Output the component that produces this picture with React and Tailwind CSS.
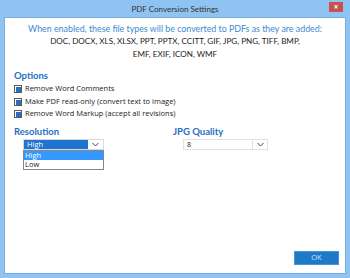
const font = { fontFamily: '"Open Sans", "Noto Sans", sans-serif' };
const lato = { fontFamily: 'Lato, "Open Sans", sans-serif' };

function Check({ label }) {
  return (
    <div className="flex items-center gap-[3px] h-[12px]">
      <div className="w-[8px] h-[8px] border border-[#5a5a5a] bg-white flex items-center justify-center">
        <div className="w-[5px] h-[5px] bg-[#2a6cc0]" />
      </div>
      <span className="text-[7.5px] text-[#222]">{label}</span>
    </div>
  );
}

function Chevron() {
  return (
    <svg width="7" height="5" viewBox="0 0 7 5" fill="none">
      <path d="M0.5 1 L3.5 4 L6.5 1" stroke="#444" strokeWidth="1" />
    </svg>
  );
}

export default function App() {
  return (
    <div className="w-[350px] h-[278px] bg-[#8fc3f2] flex flex-col overflow-hidden" style={font}>
      <div className="h-[17px] relative flex items-center justify-center shrink-0">
        <span className="text-[8px] text-[#333]" style={lato}>PDF Conversion Settings</span>
        <div className="absolute right-[7px] top-[2px] w-[14px] h-[10px] bg-[#c75050] flex items-center justify-center">
          <span className="text-white text-[8px] leading-none font-bold">×</span>
        </div>
      </div>
      <div className="flex-1 mx-[4px] mb-[4px] bg-white border border-[#78aee0] flex flex-col">
        <div className="text-center pt-[5px]" style={lato}>
          <div className="text-[8.85px] text-[#3b8ad3] leading-[12px]">When enabled, these file types will be converted to PDFs as they are added:</div>
          <div className="text-[8.1px] text-[#222] leading-[13px]">DOC, DOCX, XLS, XLSX, PPT, PPTX, CCITT, GIF, JPG, PNG, TIFF, BMP,</div>
          <div className="text-[8.1px] text-[#222] leading-[13px]">EMF, EXIF, ICON, WMF</div>
        </div>
        <div className="px-[9px] mt-[9px]">
          <div className="text-[9.5px] font-bold text-[#1f6fc1] leading-[12px]" style={lato}>Options</div>
          <div className="mt-[1px] flex flex-col">
            <Check label="Remove Word Comments" />
            <div className="h-[1px]" />
            <Check label="Make PDF read-only (convert text to image)" />
            <Check label="Remove Word Markup (accept all revisions)" />
          </div>
        </div>
        <div className="px-[9px] mt-[6px] grid grid-cols-2">
          <div>
            <div className="text-[9.5px] font-bold text-[#1f6fc1] leading-[12px]" style={lato}>Resolution</div>
            <div className="ml-[9px] mt-[1px] w-[81px]">
              <div className="h-[11px] flex border border-[#d9d9d9]">
                <div className="flex-1 bg-[#1f74cf] text-white text-[7.5px] leading-[9px] pl-[3px]">High</div>
                <div className="w-[15px] flex items-center justify-center bg-white"><Chevron /></div>
              </div>
              <div className="border border-[#828790] bg-white">
                <div className="bg-[#3399ff] text-white text-[7.5px] leading-[9px] pl-[1px]">High</div>
                <div className="text-[#222] text-[7.5px] leading-[9px] pl-[1px]">Low</div>
              </div>
            </div>
          </div>
          <div className="-ml-[2px]">
            <div className="text-[9.5px] font-bold text-[#1f6fc1] leading-[12px]" style={lato}>JPG Quality</div>
            <div className="ml-[10px] mt-[1px] w-[85px] h-[11px] flex border border-[#e2e2e2]">
              <div className="flex-1 text-[#222] text-[7px] leading-[9px] pl-[3px]">8</div>
              <div className="w-[15px] flex items-center justify-center border-l border-[#e2e2e2]"><Chevron /></div>
            </div>
          </div>
        </div>
        <div className="flex-1" />
        <div className="flex justify-end pr-[6px] pb-[8px]">
          <div className="w-[45px] h-[14px] bg-[#1e79c8] border border-[#4a95d6] flex items-center justify-center">
            <span className="text-[#cfe3f5] text-[7.5px]">OK</span>
          </div>
        </div>
      </div>
    </div>
  );
}
